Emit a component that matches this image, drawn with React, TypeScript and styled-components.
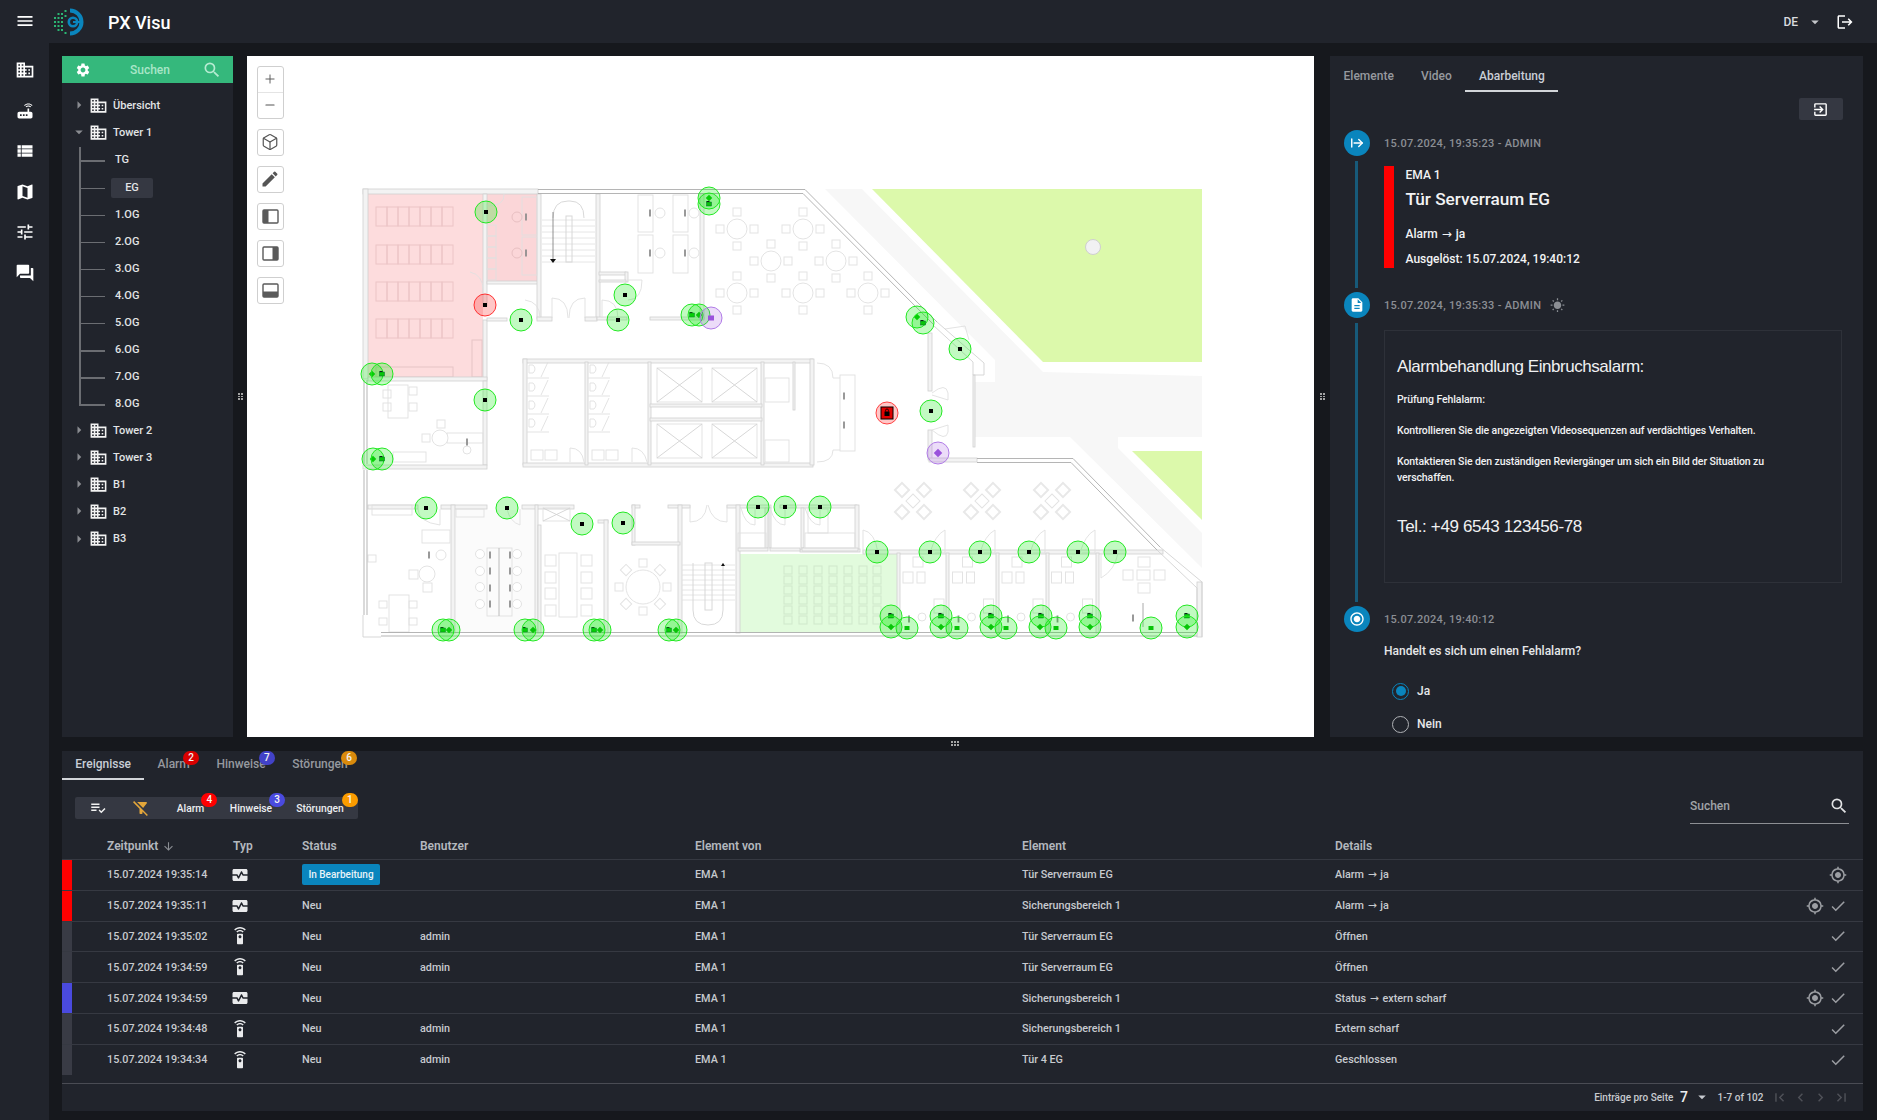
import React from "react";
import styled, { createGlobalStyle } from "styled-components";
import {
  MdMenu, MdDomain, MdRouter, MdViewList, MdMap, MdTune, MdForum, MdArrowDropDown, MdLogout,
  MdSettings, MdSearch, MdArrowRight, MdEdit, MdExitToApp, MdDescription, MdWbSunny, MdRadioButtonChecked,
  MdPlaylistAddCheck, MdFilterAltOff, MdArrowDownward, MdMonitorHeart, MdSettingsRemote, MdGpsFixed, MdCheck,
  MdFirstPage, MdLastPage, MdChevronLeft, MdChevronRight,
} from "react-icons/md";
import { ArrowRightFromLine, Box, Plus, Minus } from "lucide-react";

const GlobalStyle = createGlobalStyle`
  html, body { margin: 0; padding: 0; background: #16181d; }
  body { font-family: Roboto, "Liberation Sans", sans-serif; color: #d5d7da; }
  * { box-sizing: border-box; }
`;

const Page = styled.div`
  width: 1877px;
  height: 1120px;
  overflow: hidden;
  display: flex;
  flex-direction: column;
`;

const TopBar = styled.header`
  height: 43px;
  flex: none;
  background: #21242c;
  display: flex;
  align-items: center;
  padding: 1px 23px 0 15px;
  color: #fff;
`;

const MenuButton = styled.span`
  display: flex;
  width: 20px;
  font-size: 20px;
  margin: -2px 18px 0 0;
`;

const AppTitle = styled.span`
  font-size: 18px;
  font-weight: 500;
  margin-left: 23px;
`;

const Spacer = styled.span`
  flex: 1;
`;

const Lang = styled.span`
  font-size: 12px;
  font-weight: 500;
  color: #d9dbde;
`;

const LangCaret = styled.span`
  display: flex;
  font-size: 18px;
  color: #c4c6ca;
  margin: 0 12px 0 8px;
`;

const Body = styled.div`
  flex: 1;
  display: flex;
  min-height: 0;
`;

const Rail = styled.nav`
  width: 49px;
  flex: none;
  background: #21242c;
  display: flex;
  flex-direction: column;
  align-items: center;
  padding-top: 17px;
  gap: 20.6px;
  color: #fff;
  font-size: 20px;

  svg {
    display: block;
  }
`;

const Main = styled.main`
  flex: 1;
  display: flex;
  flex-direction: column;
  padding: 13px 14px 9px 13px;
  min-width: 0;
`;

const UpperRow = styled.div`
  height: 681px;
  flex: none;
  display: flex;
`;

const SideTree = styled.aside`
  width: 171px;
  flex: none;
  background: #21242c;
`;

const SearchHead = styled.div`
  height: 27px;
  background: #35b87c;
  display: flex;
  align-items: center;
  padding: 0 11px 0 13px;
  color: #fff;
  font-size: 16px;

  svg {
    display: block;
  }
`;

const SearchHint = styled.span`
  flex: 1;
  text-align: center;
  padding-left: 7px;
  font-size: 12px;
  font-weight: 500;
  color: #a8e6c8;
`;

const SearchGlyph = styled.span`
  display: flex;
  color: #b5ebd1;
  font-size: 20px;
`;

const TreeList = styled.div`
  padding-top: 8.5px;
`;

const TreeRow = styled.div`
  height: 27.1px;
  display: flex;
  align-items: center;
  padding-left: 8px;
  font-size: 11px;
  font-weight: 500;
  color: #e2e4e6;
`;

const TreeArrow = styled.span<{ $open?: boolean }>`
  display: flex;
  justify-content: center;
  width: 18px;
  font-size: 22px;
  color: #8a8c91;
  transform: rotate(${({ $open }) => ($open ? "90deg" : "0deg")});
`;

const TreeIcon = styled.span`
  display: flex;
  font-size: 19px;
  color: #f2f2f2;
  margin: 0 5px 0 1px;
`;

const ChildList = styled.div`
  padding-top: 1.2px;
  margin-bottom: -1.2px;
`;

const ChildRow = styled.div<{ $last?: boolean }>`
  position: relative;
  height: 27.1px;
  display: flex;
  align-items: center;
  margin-left: 17px;
  padding-left: 32px;
  font-size: 11px;
  font-weight: 500;
  color: #e2e4e6;

  &::before {
    content: "";
    position: absolute;
    left: 0;
    top: 0;
    width: 1.5px;
    height: ${({ $last }) => ($last ? "50%" : "100%")};
    background: #6b6d72;
  }

  &::after {
    content: "";
    position: absolute;
    left: 0;
    top: 50%;
    width: 26px;
    height: 1.5px;
    background: #6b6d72;
  }
`;

const FloorChip = styled.span<{ $active?: boolean }>`
  display: block;
  width: 42px;
  line-height: 20px;
  border-radius: 2px;
  text-align: ${({ $active }) => ($active ? "center" : "left")};
  padding-left: ${({ $active }) => ($active ? "0" : "4px")};
  background: ${({ $active }) => ($active ? "#353842" : "transparent")};
`;

const VGrip = styled.div<{ $w: number }>`
  width: ${({ $w }) => $w}px;
  flex: none;
  display: flex;
  align-items: center;
  justify-content: center;

  &::after {
    content: "";
    width: 5px;
    height: 9px;
    background:
      repeating-linear-gradient(0deg, #16181d 0 1px, transparent 1px 2.5px),
      linear-gradient(90deg, #a4a4a4 0 2px, #16181d 2px 3px, #a4a4a4 3px 5px);
  }
`;

const HGrip = styled.div`
  height: 14px;
  flex: none;
  display: flex;
  align-items: center;
  justify-content: center;
  padding: 0 16px 2px 0;

  &::after {
    content: "";
    width: 9px;
    height: 5px;
    background:
      repeating-linear-gradient(90deg, #16181d 0 1px, transparent 1px 3px),
      linear-gradient(180deg, #a4a4a4 0 2px, #16181d 2px 3px, #a4a4a4 3px 5px);
  }
`;

const MapPane = styled.section`
  position: relative;
  width: 1067px;
  flex: none;
  background: #fff;
  overflow: hidden;
`;

const MapSvg = styled.svg`
  display: block;
  width: 100%;
  height: 100%;
  filter: blur(0.35px);
`;

const MapTools = styled.div`
  position: absolute;
  left: 9.5px;
  top: 9.5px;
  display: flex;
  flex-direction: column;
  gap: 10px;
`;

const ToolBtn = styled.div`
  width: 27px;
  height: 27px;
  background: #fff;
  border: 1.5px solid #cfcfcf;
  border-radius: 3px;
  display: flex;
  align-items: center;
  justify-content: center;
  color: #555;
`;

const ZoomGroup = styled.div`
  width: 27px;
  height: 53px;
  background: #fff;
  border: 1.5px solid #cfcfcf;
  border-radius: 3px;
  display: flex;
  flex-direction: column;
  color: #555;
`;

const ZoomPart = styled.div`
  flex: 1;
  display: flex;
  align-items: center;
  justify-content: center;

  & + & {
    border-top: 1px solid #e4e4e4;
  }
`;

const RightPane = styled.section`
  width: 533px;
  flex: none;
  background: #21242c;
  overflow: hidden;
`;

const Tabs = styled.div`
  display: flex;
  height: 36px;
`;

const Tab = styled.div<{ $active?: boolean; $low?: boolean }>`
  position: relative;
  height: 100%;
  display: flex;
  align-items: center;
  padding: ${({ $low }) => ($low ? "5px 13.6px 0" : "0 13.3px 2px")};
  font-size: 12px;
  font-weight: 500;
  color: ${({ $active }) => ($active ? "#c9ced6" : "#96999f")};
  border-bottom: 2px solid ${({ $active }) => ($active ? "#d2d5d9" : "transparent")};
`;

const Badge = styled.span<{ $bg: string; $right: number }>`
  position: absolute;
  top: 0px;
  right: ${({ $right }) => $right}px;
  width: 16px;
  height: 14px;
  border-radius: 8px;
  background: ${({ $bg }) => $bg};
  color: #f3f3f3;
  font-size: 10px;
  font-weight: 500;
  line-height: 14px;
  text-align: center;
`;

const ActionRow = styled.div`
  display: flex;
  justify-content: flex-end;
  padding: 6px 20.5px 10px 0;
`;

const ActionBtn = styled.div`
  width: 43.5px;
  height: 22px;
  background: #353842;
  border-radius: 2px;
  display: flex;
  align-items: center;
  justify-content: center;
  color: #fff;
  font-size: 17px;
`;

const Step = styled.div<{ $h: number }>`
  display: flex;
  height: ${({ $h }) => $h}px;
  padding-left: 13.5px;
`;

const StepRail = styled.div`
  width: 26px;
  flex: none;
  display: flex;
  flex-direction: column;
  align-items: center;
`;

const StepDot = styled.div`
  width: 26px;
  height: 26px;
  flex: none;
  border-radius: 50%;
  background: #0a85bd;
  color: #fff;
  display: flex;
  align-items: center;
  justify-content: center;
  font-size: 16px;
`;

const StepLine = styled.div`
  flex: 1;
  width: 2.5px;
  margin: 5px 0 4px;
  background: #175a7a;
`;

const StepBody = styled.div`
  flex: 1;
  margin-left: 14.5px;
  padding-right: 21px;
  min-width: 0;
`;

const StepTime = styled.div`
  height: 26px;
  display: flex;
  align-items: center;
  font-size: 11px;
  font-weight: 500;
  letter-spacing: 0.3px;
  color: #8b8e94;
`;

const SunIcon = styled.span`
  display: flex;
  margin-left: 9px;
  font-size: 15px;
  color: #8b8e94;
`;

const AlarmCard = styled.div`
  height: 102px;
  margin-top: 10px;
  border-left: 10px solid #f00;
  padding-left: 11.5px;
  color: #f2f3f4;
  font-weight: 500;
`;

const CardLabel = styled.div`
  font-size: 12px;
  line-height: 15px;
  padding-top: 1.5px;
`;

const CardTitle = styled.div`
  font-size: 17.2px;
  line-height: 22px;
  margin-top: 5px;
`;

const CardValue = styled.div`
  font-size: 12px;
  line-height: 16px;
  margin-top: 16px;
`;

const CardTrigger = styled.div`
  font-size: 12px;
  line-height: 16px;
  margin-top: 9px;
`;

const Arrow = styled.span`
  font-family: "DejaVu Sans", sans-serif;
  font-weight: 400;
  margin: 0 1px;
`;

const DocBox = styled.div`
  height: 253px;
  margin-top: 12px;
  border: 1px solid #2e3139;
  padding: 23.5px 30px 0 12px;
  font-family: "Liberation Sans", Arial, sans-serif;
  color: #f0f1f2;
`;

const DocTitle = styled.div`
  font-size: 17px;
  line-height: 24px;
  letter-spacing: -0.45px;
`;

const DocText = styled.p<{ $first?: boolean }>`
  margin: ${({ $first }) => ($first ? "13px" : "15px")} 0 0;
  font-family: Roboto, sans-serif;
  font-weight: 500;
  font-size: 10.5px;
  line-height: 16px;
  letter-spacing: -0.1px;
`;

const DocPhone = styled.div`
  font-size: 17px;
  line-height: 24px;
  letter-spacing: -0.35px;
  margin-top: 29px;
`;

const Question = styled.div`
  margin-top: 10.5px;
  font-size: 12px;
  line-height: 16px;
  font-weight: 500;
  color: #e6e7e9;
`;

const RadioRow = styled.div<{ $gap: number }>`
  display: flex;
  align-items: center;
  height: 20px;
  margin-top: ${({ $gap }) => $gap}px;
  padding-left: 8px;
  font-size: 12px;
  font-weight: 500;
  color: #e6e7e9;
`;

const Radio = styled.span<{ $on?: boolean }>`
  width: 17px;
  height: 17px;
  border-radius: 50%;
  margin-right: 8px;
  border: 1.5px solid ${({ $on }) => ($on ? "#0a85bd" : "#b0b2b6")};
  display: flex;
  align-items: center;
  justify-content: center;

  &::after {
    content: "";
    width: 10px;
    height: 10px;
    border-radius: 50%;
    background: ${({ $on }) => ($on ? "#0a85bd" : "transparent")};
  }
`;

const EventsPane = styled.section`
  flex: 1;
  background: #21242c;
  display: flex;
  flex-direction: column;
  min-height: 0;
`;

const EventTabs = styled(Tabs)`
  height: 29px;
`;

const FilterRow = styled.div`
  display: flex;
  justify-content: space-between;
  padding: 17px 14px 0 13px;
  height: 44px;
  flex: none;
`;

const FilterBar = styled.div`
  width: 283px;
  height: 22px;
  background: #353842;
  border-radius: 2px;
  display: grid;
  grid-template-columns: 46px 40px 59px 62px 76px;
  align-items: center;
  justify-items: center;
  font-size: 10.3px;
  font-weight: 500;
  color: #eceef0;
`;

const FilterIcon = styled.span<{ $color?: string }>`
  display: flex;
  font-size: 18px;
  color: ${({ $color }) => $color || "#f2f2f2"};
`;

const FilterLabel = styled.span`
  position: relative;
`;

const MiniBadge = styled.span<{ $bg: string; $right: number }>`
  position: absolute;
  top: -9px;
  right: ${({ $right }) => $right}px;
  width: 16px;
  height: 14px;
  border-radius: 8px;
  background: ${({ $bg }) => $bg};
  color: #f5f5f5;
  font-size: 10px;
  line-height: 14px;
  text-align: center;
`;

const SearchBox = styled.div`
  width: 159px;
  height: 27px;
  border-bottom: 1.5px solid #8d8f94;
  display: flex;
  align-items: center;
  justify-content: space-between;
  padding: 0 0 8px 0;
  font-size: 12px;
  font-weight: 500;
  color: #a0a3a8;
`;

const SearchIconBox = styled.span`
  display: flex;
  font-size: 20px;
  color: #e1e2e4;
`;

const GridRow = styled.div<{ $head?: boolean }>`
  display: grid;
  grid-template-columns: 10px 35px 126px 69px 118px 275px 327px 313px 1fr;
  height: ${({ $head }) => ($head ? "35px" : "30.8px")};
  align-items: center;
  font-size: ${({ $head }) => ($head ? "12px" : "10.8px")};
  font-weight: ${({ $head }) => ($head ? 600 : 500)};
  color: ${({ $head }) => ($head ? "#b4b8be" : "#c7cacf")};
  border-top: ${({ $head }) => ($head ? "0" : "1px solid #363942")};
  padding-top: ${({ $head }) => ($head ? "9px" : "0")};
`;

const RowStrip = styled.span<{ $color: string }>`
  align-self: stretch;
  background: ${({ $color }) => $color};
`;

const HeadSort = styled.span`
  display: inline-flex;
  align-items: center;
  gap: 4px;
  font-size: 12px;

  svg {
    font-size: 13px;
    color: #8b8e94;
  }
`;

const TypeIcon = styled.span`
  display: flex;
  margin-left: -2px;
  font-size: 18px;
  color: #e9eaec;
`;

const StatusChip = styled.span`
  display: inline-block;
  width: 78px;
  height: 21px;
  line-height: 21px;
  border-radius: 2px;
  background: #0a85bd;
  color: #e8f3f8;
  font-size: 10px;
  text-align: center;
`;

const RowActions = styled.span`
  display: flex;
  justify-content: flex-end;
  align-items: center;
  gap: 5px;
  padding-right: 16px;
  color: #c7cacf;
`;

const ActionIcon = styled.span`
  display: flex;
  font-size: 18px;
  color: #9c9ea3;
`;

const Pager = styled.footer`
  margin-top: 8px;
  flex: 1;
  border-top: 1.5px solid #4a4c54;
  display: flex;
  align-items: center;
  justify-content: flex-end;
  padding-right: 13.5px;
  font-size: 10px;
  font-weight: 500;
  color: #c7cacf;
`;

const PerPage = styled.span`
  margin: 0 4.6px 0 6.6px;
  font-size: 14px;
  color: #eceef0;
`;

const PagerCaret = styled.span`
  display: flex;
  font-size: 18px;
  color: #c7cacf;
  margin-right: 7px;
`;

const PagerNav = styled.span`
  display: flex;
  gap: 3.5px;
  margin-left: 7.5px;
  font-size: 17px;
  color: #4f5158;
`;

const Logo = () => (
  <svg width="32" height="28" viewBox="0 0 32 28">
    {[[2,10],[2,14],[2,18],[5.5,6],[5.5,10],[5.5,14],[5.5,18],[5.5,22],[9,10],[9,14],[9,18],[9,6],[9,22],[12.5,3],[12.5,25],[12.5,8]].map(([x, y]) => (
      <rect key={`${x}-${y}`} x={x - 1} y={y - 1} width="2" height="2" fill="#2bb673" />
    ))}
    <path d="M17 2.5 A11.5 11.5 0 1 1 17 25.5" fill="none" stroke="#0a85bd" strokeWidth="4" />
    <circle cx="20" cy="14" r="4.2" fill="none" stroke="#0a85bd" strokeWidth="2.6" />
    <rect x="20" y="13" width="9" height="2" fill="#0a85bd" />
  </svg>
);

const PanelIcon = ({ side }: { side: "left" | "right" | "bottom" }) => (
  <svg width="17" height="15" viewBox="0 0 17 15">
    <rect x="1" y="1" width="15" height="13" rx="1" fill="#fff" stroke="#5a5a5a" strokeWidth="1.4" />
    {side === "left" && <rect x="1" y="1" width="5.5" height="13" fill="#5a5a5a" />}
    {side === "right" && <rect x="10.5" y="1" width="5.5" height="13" fill="#5a5a5a" />}
    {side === "bottom" && <rect x="1" y="8.5" width="15" height="5.5" fill="#5a5a5a" />}
  </svg>
);

// wall pieces of the floor plan, in page pixels
const walls = [
  [363,189,175,5],[363,189,5,190],[483,194,4,112],[483,320,4,60],[368,377,119,4],[483,381,4,84],[363,465,124,4],
  [487,281,51,3],[487,318,20,3],[537,194,4,125],[596,194,4,125],[537,317,15,4],[585,317,12,4],[700,194,4,125],
  [597,317,30,3],[650,317,54,3],[599,272,27,3],[625,272,3,10],[599,280,27,2],
  [928,333,4,58],[928,430,4,30],[929,458,48,4],[973,375,2,72],[1197,582,5,55],
  [368,505,50,4],[441,505,46,4],[522,505,52,4],[598,520,10,3],[632,505,8,3],[668,505,22,3],[727,505,44,3],[780,505,77,3],
  [855,505,4,45],[800,549,60,3],[863,550,300,4],[451,505,4,128],[535,505,3,128],[538,525,3,108],[604,520,4,113],
  [678,505,4,128],[736,505,4,128],[632,505,3,40],[632,542,48,3],[765,508,3,40],[769,508,2,40],[801,508,3,40],
  [738,548,30,3],[770,548,30,3],[802,548,56,3],[897,553,3,80],[946,553,3,80],[996,553,3,80],[1046,553,3,80],[1096,553,3,80],
  [523,359,290,4],[523,359,4,106],[523,463,290,4],[810,359,4,106],[585,362,3,103],[648,362,3,103],[761,362,3,103],
  [650,404,112,3],[650,418,112,3],[793,362,2,48],
];

const furniture: number[][] = [
  [657,368,45,34],[712,368,45,34],[657,424,45,34],[712,424,45,34],[543,508,27,13],
  [638,195,15,37],[673,195,15,37],[638,235,15,38],[673,235,15,38],[522,197,15,38],[522,237,15,38],
  [487,225,9,11],[487,236,9,11],[487,247,9,11],[487,258,9,11],[487,269,9,11],
  [487,548,25,68],[559,553,18,64],[840,375,15,76],[388,385,20,33],[368,555,8,7],[383,390,8,8],[383,403,8,8],[409,387,8,8],[409,403,8,8],
  [389,595,20,37],[379,601,8,7],[379,618,8,7],[409,601,8,7],[409,618,8,7],[422,530,28,13],[409,570,9,9],[423,583,9,9],
  [531,450,12,10],[545,450,12,10],[592,450,12,10],[606,450,12,10],[447,433,36,10],[393,452,33,10],
  [765,378,24,24],[765,440,24,22],
  [372,505,40,10],[456,509,28,8],[738,533,28,15],[805,533,50,15],[808,509,20,24],
];

const tables = [[737,229],[771,261],[737,293],[803,229],[836,261],[803,293],[868,293]];
const clusters = [[913,501],[982,501],[1052,501]];
const doors = [
  "M483 290 Q483 275 470 272","M487 206 Q505 206 504 194","M540 318 Q540 302 525 300","M552 318 V298 Q568 298 568 318","M585 318 V298 Q569 298 569 318",
  "M602 318 V300 Q618 300 618 318","M627 280 H642 Q642 300 628 300","M440 509 V525 Q418 522 418 509","M520 509 V525 Q510 522 507 509",
  "M690 505 V522 Q705 522 707 505","M727 505 V522 Q712 522 708 505","M755 508 V525 Q745 525 741 508","M785 508 V525 Q775 525 770 508","M820 508 V525 Q810 525 805 508",
  "M863 553 V530 Q875 532 878 553","M935 553 H945 V530 Q935 535 930 553","M984 553 H995 V530 Q985 535 980 553","M1033 553 H1045 V530 Q1035 535 1030 553","M1082 553 H1095 V530 Q1085 535 1080 553",
  "M1101 553 V578 Q1115 570 1118 553","M932 395 L948 400 L948 393 Q946 382 932 393","M932 430 L948 425 L948 432 Q946 442 932 430",
  "M817 363 Q833 363 833 378 H840 M840 450 H833 Q833 462 817 462","M945 329 L965 326 L969 340",
  "M570 462 V448 Q582 448 584 462","M632 462 V448 Q644 448 647 462",
];

type Kind = "dot" | "folder" | "diamond" | "square";

const markers: [number, number, Kind][] = [
  [486,212,"dot"],[709,198,"diamond"],[709,204,"folder"],[521,320,"dot"],[625,295,"dot"],[618,320,"dot"],[692,315,"folder"],[699,315,"diamond"],
  [372,374,"diamond"],[382,374,"folder"],[485,400,"dot"],[373,459,"diamond"],[382,459,"folder"],
  [917,317,"diamond"],[923,323,"folder"],[960,349,"dot"],[931,411,"dot"],
  [426,508,"dot"],[507,508,"dot"],[582,524,"dot"],[623,523,"dot"],[758,507,"dot"],[785,507,"dot"],[820,507,"dot"],
  [443,630,"folder"],[449,630,"diamond"],[525,630,"folder"],[533,630,"diamond"],[594,630,"folder"],[600,630,"diamond"],[669,630,"folder"],[676,630,"diamond"],
  [877,552,"dot"],[930,552,"dot"],[980,552,"dot"],[1029,552,"dot"],[1078,552,"dot"],[1115,552,"dot"],
  [891,616,"folder"],[941,616,"folder"],[991,616,"folder"],[1041,616,"folder"],[1090,616,"folder"],[1187,616,"folder"],
  [891,627,"diamond"],[941,627,"diamond"],[991,627,"diamond"],[1040,627,"diamond"],[1090,627,"diamond"],[1187,627,"diamond"],
  [907,628,"square"],[957,628,"square"],[1006,628,"square"],[1056,628,"square"],[1151,628,"square"],
];

const Glyph = ({ x, y, kind, color }: { x: number; y: number; kind: Kind; color: string }) => {
  if (kind === "dot") return <rect x={x - 2} y={y - 2} width="4" height="4" fill="#000" />;
  if (kind === "diamond") return <rect x={x - 2.3} y={y - 2.3} width="4.6" height="4.6" fill={color} transform={`rotate(45 ${x} ${y})`} />;
  if (kind === "square") return <rect x={x - 2.5} y={y - 2} width="5" height="4" fill={color} />;
  return (
    <g>
      <rect x={x - 2.5} y={y - 2} width="5" height="4" fill={color} />
      <path d={`M${x - 2.5} ${y - 2} V${y - 3} H${x} L${x + 1} ${y - 2} Z`} fill="#111" />
      <rect x={x - 2.5} y={y - 2} width="5" height="4" fill="none" stroke="#063" strokeWidth="0.5" />
    </g>
  );
};

const FloorPlan = () => (
  <MapSvg viewBox="247 56 1067 681" preserveAspectRatio="none">
    <polygon points="825,189 862,189 1043,372 1202,376 1202,437 1118,437 1118,448 1202,533 1202,568 1070,437 975,437 975,382 995,382 995,360" fill="#f7f7f7" />
    <polygon points="872,189 1202,189 1202,362 1043,362" fill="#dcf9ab" />
    <polygon points="1132,451 1202,451 1202,520" fill="#dcf9ab" />
    <circle cx="1093" cy="247" r="7.5" fill="#f1f1f3" stroke="#cfcfcf" strokeWidth="1" />
    <rect x="368" y="194" width="115" height="183" fill="#fddcdd" />
    <rect x="487" y="194" width="51" height="87" fill="#fbd6d8" />
    <rect x="739" y="554" width="158" height="79" fill="#e2fbdd" />
    <rect x="456" y="510" width="79" height="122" fill="#fbfbfb" />

    {[207,245,282,319].map((y) => (
      <g key={y} fill="none" stroke="#ecc4c6" strokeWidth="1">
        {[0,1,2,3,4,5,6].map((i) => <rect key={i} x={376 + i * 11} y={y} width="11" height="19" />)}
      </g>
    ))}
    <g fill="none" stroke="#e6c4c6" strokeWidth="1"><rect x="376" y="367" width="77" height="10" /><rect x="472" y="340" width="10" height="37" /></g>

    <g fill="#f3f3f3" stroke="#d0d0d0" strokeWidth="0.8">
      {walls.map(([x, y, w, h]) => <rect key={`${x}-${y}-${w}`} x={x} y={y} width={w} height={h} />)}
    </g>
    <g fill="none" stroke="#e0e0e0" strokeWidth="0.9">
      {furniture.map(([x, y, w, h]) => <rect key={`${x}-${y}-${w}`} x={x} y={y} width={w} height={h} />)}
      {doors.map((d) => <path key={d} d={d} />)}
      {[527,588].map((x) =>
        [365,383,401,419].map((y) => (
          <g key={`${x}-${y}`}>
            <path d={`M${x + 2} ${y} H${x + 6} Q${x + 10} ${y + 4} ${x + 6} ${y + 8} H${x + 2} Z`} />
            <line x1={x + 14} y1={y + 12} x2={x + 21} y2={y - 3} />
            <line x1={x} y1={y + 13} x2={x + 22} y2={y + 13} />
          </g>
        ))
      )}
    </g>
    <g stroke="#d2d2d2" strokeWidth="0.9">
      {[[657,368],[712,368],[657,424],[712,424]].map(([x, y]) => (
        <g key={`${x}-${y}`}>
          <line x1={x} y1={y} x2={x + 45} y2={y + 34} />
          <line x1={x + 45} y1={y} x2={x} y2={y + 34} />
        </g>
      ))}
      <line x1="543" y1="508" x2="570" y2="521" /><line x1="570" y1="508" x2="543" y2="521" />
    </g>

    <g fill="#fff" stroke="#e3e3e3" strokeWidth="1">
      {tables.map(([x, y]) => (
        <g key={`${x}-${y}`}>
          <circle cx={x} cy={y} r="10" />
          <rect x={x - 4} y={y - 21} width="8" height="8" /><rect x={x - 4} y={y + 13} width="8" height="8" />
          <rect x={x - 21} y={y - 4} width="8" height="8" /><rect x={x + 13} y={y - 4} width="8" height="8" />
        </g>
      ))}
      {clusters.map(([x, y]) => (
        <g key={x}>
          <rect x={x - 5} y={y - 5} width="10" height="10" transform={`rotate(45 ${x} ${y})`} />
          {[[-11,-11],[11,-11],[-11,11],[11,11]].map(([dx, dy]) => (
            <rect key={`${dx}${dy}`} x={x + dx - 5} y={y + dy - 5} width="10" height="10" strokeWidth="2" stroke="#e8e8e8" transform={`rotate(45 ${x + dx} ${y + dy})`} />
          ))}
        </g>
      ))}
      <circle cx="643" cy="587" r="17" />
      {[0,45,90,135,180,225,270,315].map((a) => (
        <rect key={a} x="639" y="559" width="8" height="8" transform={`rotate(${a} 643 587)`} />
      ))}
      {[560,577,593,610].map((y) => (
        <g key={y}>
          <rect x="545" y={y - 5} width="11" height="11" /><rect x="581" y={y - 5} width="11" height="11" />
          <circle cx="480" cy={y - 6} r="4.5" /><circle cx="517" cy={y - 6} r="4.5" />
        </g>
      ))}
      <circle cx="427" cy="574" r="8" /><circle cx="441" cy="555" r="5" />
      {[788,803,818,833,848,863,877].map((x) =>
        [570,580,590,600,610,620].map((y) => <rect key={`${x}-${y}`} x={x - 4} y={y - 4} width="8" height="8" stroke="#cfe8cb" fill="none" />)
      )}
      {[0,49.5,99,148.5].map((dx) => (
        <g key={dx}>
          <rect x={913 + dx} y="557" width="10" height="10" /><rect x={903 + dx} y="572" width="10" height="11" /><rect x={917 + dx} y="572" width="8" height="11" />
          <rect x={934 + dx} y="599" width="10" height="14" /><circle cx={922 + dx} cy="617" r="4" />
        </g>
      ))}
      <rect x="1138" y="557" width="12" height="10" /><rect x="1123" y="570" width="10" height="10" /><rect x="1137" y="570" width="13" height="10" />
      <rect x="1154" y="570" width="11" height="10" /><rect x="1138" y="583" width="12" height="10" />
      <circle cx="517" cy="217" r="5" fill="none" stroke="#e8c0c2" /><circle cx="517" cy="253" r="5" fill="none" stroke="#e8c0c2" />
      <circle cx="660" cy="213" r="5" /><circle cx="694" cy="213" r="5" /><circle cx="660" cy="253" r="5" /><circle cx="694" cy="253" r="5" />
      <circle cx="467" cy="450" r="4" /><circle cx="440" cy="438" r="8" />
      <rect x="422" y="434" width="8" height="8" /><rect x="437" y="420" width="8" height="8" />
    </g>

    <g stroke="#e0e0e0" strokeWidth="0.8">
      {[220,226,232,238,244,250,256,262].map((y) => <line key={y} x1="542" y1={y} x2="595" y2={y} />)}
      {[565,570,575,580,585,590,595,600].map((y) => <line key={y} x1="682" y1={y} x2="735" y2={y} />)}
    </g>
    <g fill="none" stroke="#d8d8d8" strokeWidth="1">
      <path d="M553 218 Q553 201 568 201 H570 Q584 201 584 218" />
      <rect x="566" y="216" width="6" height="46" />
      <path d="M693 563 V610 Q693 625 708 625 Q723 625 723 610 V563" />
      <rect x="705" y="563" width="7" height="47" />
    </g>
    <line x1="553" y1="212" x2="553" y2="260" stroke="#777" strokeWidth="0.8" />
    <polygon points="550,259 556,259 553,263" fill="#111" />
    <polygon points="721,566 725,566 723,563" fill="#111" />

    <g stroke="#8e8e8e" strokeWidth="1.8">
      {[[526,217],[526,253],[650,213],[685,213],[650,253],[685,253],[909,619],[958.5,619],[1008,619],[1057.5,619],[1133,618],[429,555],[490,555],[510,555],[490,571],[510,571],[490,588],[510,588],[490,604],[510,604],[844,396],[844,425],[467,442]].map(([x, y]) => (
        <line key={`${x}-${y}`} x1={x} y1={y - 3.5} x2={x} y2={y + 3.5} />
      ))}
    </g>
    <line x1="499" y1="548" x2="499" y2="616" stroke="#bcbcbc" strokeWidth="1" />
    <line x1="1143" y1="603" x2="1143" y2="627" stroke="#aaa" strokeWidth="1" />

    <g fill="none" stroke="#adadad" strokeWidth="0.9">
      <path d="M538 189.5 H805 L937 322 M538 193.5 H803 L934 325" />
      <path d="M977 458.5 H1073 L1160 547 M977 462.5 H1071 L1157 550" />
      <path d="M364 380 V464 M367 380 V464" />
      <path d="M381 632.5 H1197 M381 636 H1197" />
      <path d="M364 470 V615 M367 470 V615" />
    </g>
    <g fill="none" stroke="#d2d2d2" strokeWidth="0.9">
      <path d="M937 322 L984 363 V375 H973 V362 L933 325" />
      <path d="M1160 547 L1202 582 V637 M1157 550 L1197 588 V637" />
      <path d="M363 615 V637 H381" />
    </g>

    {markers.map(([x, y, kind]) => (
      <g key={`${x}-${y}-${kind}`}>
        <circle cx={x} cy={y} r="11" fill="rgba(0,235,0,0.24)" stroke="#22e822" strokeWidth="1" />
        <Glyph x={x} y={y} kind={kind} color="#08c508" />
      </g>
    ))}

    <circle cx="485" cy="305" r="11" fill="rgba(255,0,0,0.22)" stroke="#ff3030" strokeWidth="1" />
    <rect x="483" y="303" width="4" height="4" fill="#000" />
    <circle cx="887" cy="413" r="11" fill="rgba(255,0,0,0.22)" stroke="#ff4040" strokeWidth="1" />
    <rect x="881" y="407" width="12" height="12" fill="#e00000" stroke="#000" strokeWidth="1" />
    <rect x="884.5" y="411.5" width="5" height="4.5" fill="#000" />
    <path d="M885.5 411.5 V410.5 a1.5 1.5 0 0 1 3 0 V411.5" fill="none" stroke="#000" strokeWidth="0.8" />
    <circle cx="711" cy="318" r="11" fill="rgba(150,60,220,0.18)" stroke="#b07be6" strokeWidth="1" />
    <rect x="708" y="315.5" width="6" height="5" fill="#9a52dc" />
    <circle cx="938" cy="453" r="11" fill="rgba(150,60,220,0.18)" stroke="#b07be6" strokeWidth="1" />
    <rect x="935" y="450" width="6" height="6" fill="#9a52dc" transform="rotate(45 938 453)" />
  </MapSvg>
);

const tree = ["TG", "EG", "1.OG", "2.OG", "3.OG", "4.OG", "5.OG", "6.OG", "7.OG", "8.OG"];
const lastNodes = ["Tower 2", "Tower 3", "B1", "B2", "B3"];

type EventRow = {
  time: string; kind: "pulse" | "remote"; status: string; user: string; element: string; details: React.ReactNode; id: string; strip: string; target?: boolean; check?: boolean;
};

const GREY = "#393b45";
const alarmJa = <>Alarm <Arrow>→</Arrow> ja</>;

const events: EventRow[] = [
  { id: "a", time: "15.07.2024 19:35:14", kind: "pulse", status: "In Bearbeitung", user: "", element: "Tür Serverraum EG", details: alarmJa, strip: "#f00", target: true },
  { id: "b", time: "15.07.2024 19:35:11", kind: "pulse", status: "Neu", user: "", element: "Sicherungsbereich 1", details: alarmJa, strip: "#f00", target: true, check: true },
  { id: "c", time: "15.07.2024 19:35:02", kind: "remote", status: "Neu", user: "admin", element: "Tür Serverraum EG", details: "Öffnen", strip: GREY, check: true },
  { id: "d", time: "15.07.2024 19:34:59", kind: "remote", status: "Neu", user: "admin", element: "Tür Serverraum EG", details: "Öffnen", strip: GREY, check: true },
  { id: "e", time: "15.07.2024 19:34:59", kind: "pulse", status: "Neu", user: "", element: "Sicherungsbereich 1", details: <>Status <Arrow>→</Arrow> extern scharf</>, strip: "#4a4adf", target: true, check: true },
  { id: "f", time: "15.07.2024 19:34:48", kind: "remote", status: "Neu", user: "admin", element: "Sicherungsbereich 1", details: "Extern scharf", strip: GREY, check: true },
  { id: "g", time: "15.07.2024 19:34:34", kind: "remote", status: "Neu", user: "admin", element: "Tür 4 EG", details: "Geschlossen", strip: GREY, check: true },
];

export default function App() {
  return (
    <Page>
      <GlobalStyle />
      <TopBar>
        <MenuButton><MdMenu /></MenuButton>
        <Logo />
        <AppTitle>PX Visu</AppTitle>
        <Spacer />
        <Lang>DE</Lang>
        <LangCaret><MdArrowDropDown /></LangCaret>
        <MdLogout size={18} />
      </TopBar>
      <Body>
        <Rail>
          <MdDomain /><MdRouter /><MdViewList /><MdMap /><MdTune /><MdForum />
        </Rail>
        <Main>
          <UpperRow>
            <SideTree>
              <SearchHead>
                <MdSettings />
                <SearchHint>Suchen</SearchHint>
                <SearchGlyph><MdSearch /></SearchGlyph>
              </SearchHead>
              <TreeList>
                <TreeRow><TreeArrow><MdArrowRight /></TreeArrow><TreeIcon><MdDomain /></TreeIcon>Übersicht</TreeRow>
                <TreeRow><TreeArrow $open><MdArrowRight /></TreeArrow><TreeIcon><MdDomain /></TreeIcon>Tower 1</TreeRow>
                <ChildList>
                  {tree.map((floor, i) => (
                    <ChildRow key={floor} $last={i === tree.length - 1}>
                      <FloorChip $active={floor === "EG"}>{floor}</FloorChip>
                    </ChildRow>
                  ))}
                </ChildList>
                {lastNodes.map((node) => (
                  <TreeRow key={node}><TreeArrow><MdArrowRight /></TreeArrow><TreeIcon><MdDomain /></TreeIcon>{node}</TreeRow>
                ))}
              </TreeList>
            </SideTree>
            <VGrip $w={14} />
            <MapPane>
              <FloorPlan />
              <MapTools>
                <ZoomGroup>
                  <ZoomPart><Plus size={14} strokeWidth={1.6} /></ZoomPart>
                  <ZoomPart><Minus size={14} strokeWidth={1.8} /></ZoomPart>
                </ZoomGroup>
                <ToolBtn><Box size={18} strokeWidth={1.6} /></ToolBtn>
                <ToolBtn><MdEdit size={20} /></ToolBtn>
                <ToolBtn><PanelIcon side="left" /></ToolBtn>
                <ToolBtn><PanelIcon side="right" /></ToolBtn>
                <ToolBtn><PanelIcon side="bottom" /></ToolBtn>
              </MapTools>
            </MapPane>
            <VGrip $w={16} />
            <RightPane>
              <Tabs>
                <Tab $low>Elemente</Tab>
                <Tab $low>Video</Tab>
                <Tab $low $active>Abarbeitung</Tab>
              </Tabs>
              <ActionRow><ActionBtn><MdExitToApp /></ActionBtn></ActionRow>
              <Step $h={162}>
                <StepRail>
                  <StepDot><ArrowRightFromLine size={14} strokeWidth={2.4} /></StepDot>
                  <StepLine />
                </StepRail>
                <StepBody>
                  <StepTime>15.07.2024, 19:35:23 - ADMIN</StepTime>
                  <AlarmCard>
                    <CardLabel>EMA 1</CardLabel>
                    <CardTitle>Tür Serverraum EG</CardTitle>
                    <CardValue>{alarmJa}</CardValue>
                    <CardTrigger>Ausgelöst: 15.07.2024, 19:40:12</CardTrigger>
                  </AlarmCard>
                </StepBody>
              </Step>
              <Step $h={314}>
                <StepRail>
                  <StepDot><MdDescription /></StepDot>
                  <StepLine />
                </StepRail>
                <StepBody>
                  <StepTime>15.07.2024, 19:35:33 - ADMIN<SunIcon><MdWbSunny /></SunIcon></StepTime>
                  <DocBox>
                    <DocTitle>Alarmbehandlung Einbruchsalarm:</DocTitle>
                    <DocText $first>Prüfung Fehlalarm:</DocText>
                    <DocText>Kontrollieren Sie die angezeigten Videosequenzen auf verdächtiges Verhalten.</DocText>
                    <DocText>Kontaktieren Sie den zuständigen Reviergänger um sich ein Bild der Situation zu verschaffen.</DocText>
                    <DocPhone>Tel.: +49 6543 123456-78</DocPhone>
                  </DocBox>
                </StepBody>
              </Step>
              <Step $h={130}>
                <StepRail>
                  <StepDot><MdRadioButtonChecked /></StepDot>
                </StepRail>
                <StepBody>
                  <StepTime>15.07.2024, 19:40:12</StepTime>
                  <Question>Handelt es sich um einen Fehlalarm?</Question>
                  <RadioRow $gap={22.5}><Radio $on />Ja</RadioRow>
                  <RadioRow $gap={13}><Radio />Nein</RadioRow>
                </StepBody>
              </Step>
            </RightPane>
          </UpperRow>
          <HGrip />
          <EventsPane>
            <EventTabs>
              <Tab $active>Ereignisse</Tab>
              <Tab>Alarm<Badge $bg="#d90000" $right={4}>2</Badge></Tab>
              <Tab>Hinweise<Badge $bg="#4242c8" $right={4}>7</Badge></Tab>
              <Tab>Störungen<Badge $bg="#d98a0c" $right={4}>6</Badge></Tab>
            </EventTabs>
            <FilterRow>
              <FilterBar>
                <FilterIcon><MdPlaylistAddCheck /></FilterIcon>
                <FilterIcon $color="#e3a63a"><MdFilterAltOff /></FilterIcon>
                <FilterLabel>Alarm<MiniBadge $bg="#f00" $right={-13}>4</MiniBadge></FilterLabel>
                <FilterLabel>Hinweise<MiniBadge $bg="#4a4adf" $right={-13}>3</MiniBadge></FilterLabel>
                <FilterLabel>Störungen<MiniBadge $bg="#fb9c00" $right={-14}>1</MiniBadge></FilterLabel>
              </FilterBar>
              <SearchBox>Suchen<SearchIconBox><MdSearch /></SearchIconBox></SearchBox>
            </FilterRow>
            <GridRow $head>
              <span /><span />
              <HeadSort>Zeitpunkt <MdArrowDownward /></HeadSort>
              <span>Typ</span><span>Status</span><span>Benutzer</span><span>Element von</span><span>Element</span><span>Details</span>
            </GridRow>
            {events.map((row) => (
              <GridRow key={row.id}>
                <RowStrip $color={row.strip} />
                <span />
                <span>{row.time}</span>
                <TypeIcon>{row.kind === "pulse" ? <MdMonitorHeart /> : <MdSettingsRemote />}</TypeIcon>
                <span>{row.status === "Neu" ? row.status : <StatusChip>{row.status}</StatusChip>}</span>
                <span>{row.user}</span>
                <span>EMA 1</span>
                <span>{row.element}</span>
                <RowActions>
                  <Spacer>{row.details}</Spacer>
                  {row.target && <ActionIcon><MdGpsFixed /></ActionIcon>}
                  {row.check && <ActionIcon><MdCheck /></ActionIcon>}
                </RowActions>
              </GridRow>
            ))}
            <Pager>
              Einträge pro Seite
              <PerPage>7</PerPage>
              <PagerCaret><MdArrowDropDown /></PagerCaret>
              1-7 of 102
              <PagerNav><MdFirstPage /><MdChevronLeft /><MdChevronRight /><MdLastPage /></PagerNav>
            </Pager>
          </EventsPane>
        </Main>
      </Body>
    </Page>
  );
}
